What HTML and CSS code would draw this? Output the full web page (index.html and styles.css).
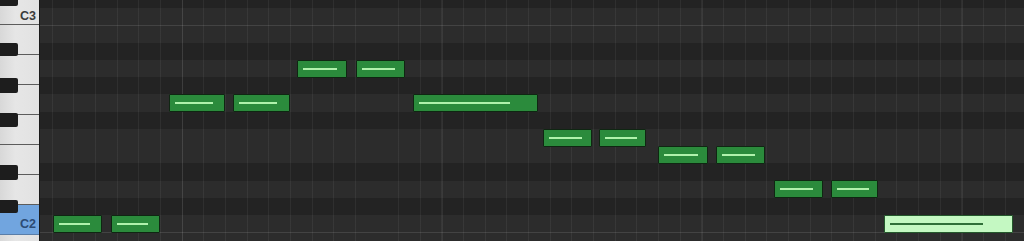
FILE: index.html
```html
<!DOCTYPE html>
<html>
<head>
<meta charset="utf-8">
<link rel="stylesheet" href="styles.css">
</head>
<body>
<div class="roll">
  <div class="keyboard">
    <div class="whites">
      <div class="wkey"><span class="label">C3</span></div>
      <div class="wkey"></div>
      <div class="wkey"></div>
      <div class="wkey"></div>
      <div class="wkey"></div>
      <div class="wkey"></div>
      <div class="wkey"></div>
      <div class="wkey active"><span class="label">C2</span></div>
      <div class="wkey"></div>
    </div>
    <div class="bkey k-cs3"></div>
    <div class="bkey k-as2"></div>
    <div class="bkey k-gs2"></div>
    <div class="bkey k-fs2"></div>
    <div class="bkey k-ds2"></div>
    <div class="bkey k-cs2"></div>
  </div>
  <div class="grid">
    <div class="rows">
      <div class="row black"></div>
      <div class="row white"></div>
      <div class="row white octave"></div>
      <div class="row black"></div>
      <div class="row white"></div>
      <div class="row black"></div>
      <div class="row white"></div>
      <div class="row black"></div>
      <div class="row white"></div>
      <div class="row white"></div>
      <div class="row black"></div>
      <div class="row white"></div>
      <div class="row black"></div>
      <div class="row white"></div>
      <div class="row white octave"></div>
    </div>
    <div class="vlines"></div>
    <div class="note p-c2" style="left:13px;width:49px"><i style="width:31px"></i></div>
    <div class="note p-c2" style="left:71px;width:49px"><i style="width:31px"></i></div>
    <div class="note p-g2" style="left:129px;width:56px"><i style="width:38px"></i></div>
    <div class="note p-g2" style="left:193px;width:57px"><i style="width:38px"></i></div>
    <div class="note p-a2" style="left:257px;width:50px"><i style="width:34px"></i></div>
    <div class="note p-a2" style="left:316px;width:49px"><i style="width:33px"></i></div>
    <div class="note p-g2" style="left:373px;width:125px"><i style="width:91px"></i></div>
    <div class="note p-f2" style="left:503px;width:49px"><i style="width:33px"></i></div>
    <div class="note p-f2" style="left:559px;width:47px"><i style="width:32px"></i></div>
    <div class="note p-e2" style="left:618px;width:50px"><i style="width:34px"></i></div>
    <div class="note p-e2" style="left:676px;width:49px"><i style="width:33px"></i></div>
    <div class="note p-d2" style="left:734px;width:49px"><i style="width:33px"></i></div>
    <div class="note p-d2" style="left:791px;width:47px"><i style="width:32px"></i></div>
    <div class="note p-c2 selected" style="left:844px;width:129px"><i style="width:93px"></i></div>
  </div>
</div>
</body>
</html>
```
FILE: styles.css
```css
html, body {
  margin: 0;
  padding: 0;
  background: #262626;
  overflow: hidden;
}
.roll {
  display: flex;
  width: 1024px;
  height: 241px;
  overflow: hidden;
}
.keyboard {
  position: relative;
  width: 39px;
  flex: 0 0 39px;
  border-right: 1px solid #1a1a1a;
  background: #e3e3e3;
  overflow: hidden;
}
.whites {
  display: flex;
  flex-direction: column;
  margin-top: -5px;
}
.wkey {
  position: relative;
  height: 30px;
  flex: 0 0 30px;
  box-sizing: border-box;
  border-bottom: 1px solid #5c5c5c;
  background: linear-gradient(90deg, #d8d8d8 0%, #e6e6e6 40%, #e2e2e2 100%);
  display: flex;
  align-items: flex-end;
  justify-content: flex-end;
}
.wkey.active {
  background: #71a5df;
  border-bottom-color: #5a7ea8;
}
.label {
  font-family: "Liberation Sans", Arial, sans-serif;
  font-weight: bold;
  font-size: 12.5px;
  color: #3b3b3b;
  padding: 0 3px 1px 0;
  line-height: 13px;
}
.wkey.active .label {
  color: #2c4b74;
  padding-bottom: 3px;
}
.bkey {
  position: absolute;
  left: 0;
  width: 18px;
  height: 14px;
  background: #1d1d1d;
  border-radius: 0 2px 2px 0;
}
.k-cs3 { top: -8px; }
.k-as2 { top: 43px; height: 13px; }
.k-gs2 { top: 78px; height: 15px; }
.k-fs2 { top: 113px; }
.k-ds2 { top: 165px; height: 15px; }
.k-cs2 { top: 200px; height: 13px; }

.grid {
  position: relative;
  flex: 1;
  overflow: hidden;
}
.rows {
  display: flex;
  flex-direction: column;
  margin-top: -9.25px;
}
.row {
  height: 17.25px;
  flex: 0 0 17.25px;
}
.row.white { background: #2c2c2c; }
.row.black { background: #232323; }
.row.octave { box-shadow: inset 0 1px 0 #434343; }
.vlines {
  position: absolute;
  inset: 0;
  background-image:
    repeating-linear-gradient(90deg, transparent 0, transparent 141.6px, rgba(255,255,255,0.07) 141.6px, rgba(255,255,255,0.07) 142.6px, transparent 142.6px, transparent 260px),
    repeating-linear-gradient(90deg, transparent 0, transparent 11.6px, rgba(255,255,255,0.055) 11.6px, rgba(255,255,255,0.055) 12.6px, transparent 12.6px, transparent 21.66px);
  pointer-events: none;
}
.note {
  position: absolute;
  height: 18px;
  box-sizing: border-box;
  border: 1px solid #0f2612;
  border-radius: 1px;
  background: #2b8b3c;
  display: flex;
  align-items: center;
  padding-left: 5px;
}
.note i {
  display: block;
  height: 2px;
  background: #b0f2ac;
}
.note.selected {
  background: #c4f8c2;
  border-color: #23582b;
}
.note.selected i {
  background: #2f6f38;
}
.p-a2 { top: 60px; }
.p-g2 { top: 94px; }
.p-f2 { top: 129px; }
.p-e2 { top: 146px; }
.p-d2 { top: 180px; }
.p-c2 { top: 215px; }
```
